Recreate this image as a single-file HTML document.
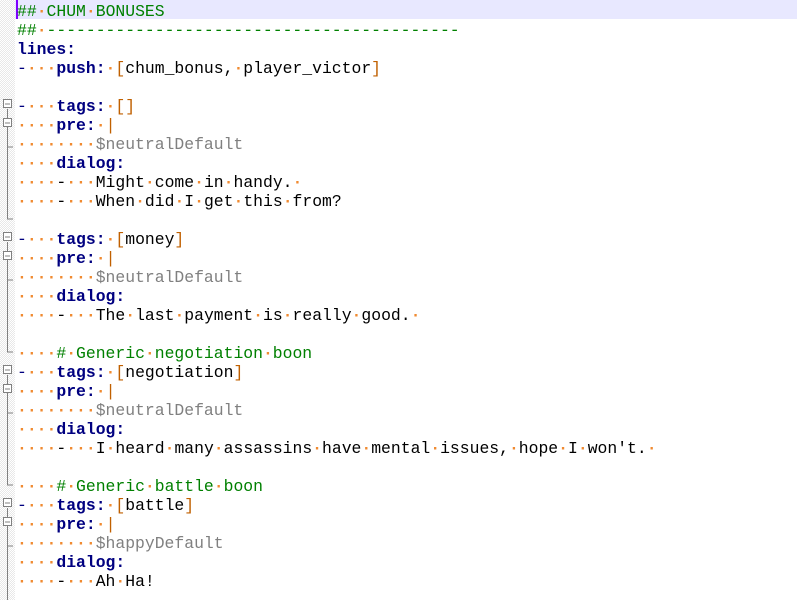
<!DOCTYPE html>
<html><head><meta charset="utf-8"><style>
body{margin:0;width:797px;height:600px;background:#fff;overflow:hidden;position:relative;font-family:"Liberation Mono",monospace;font-size:16.4px}
.m{position:absolute;left:0;top:0;width:15px;height:600px;background:repeating-conic-gradient(#e8e8e8 0 25%,#fff 0 50%) 0 0/2px 2px}
.hl{position:absolute;left:15px;top:0;width:782px;height:19px;background:#e8e8ff}
.car{position:absolute;left:16px;top:0;width:2px;height:19px;background:#8000ff}
.t{position:absolute;left:17px;top:2px;line-height:19px}
.r{height:19px;white-space:pre}
i{font-style:normal;color:#f08a30;font-weight:bold}
.k{color:#000080;font-weight:bold}
.n{color:#000080}
.c{color:#008000}
.b{color:#c06000}
.g{color:#808080}
</style></head><body>
<div class="m"></div>
<svg style="position:absolute;left:0;top:0" width="15" height="600">
<g stroke="#808080" fill="#fff" stroke-width="1">
<path d="M7.5 109V219H13M7.5 147H13M7.5 242V352H13M7.5 280H13M7.5 375V485H13M7.5 413H13M7.5 508V600M7.5 546H13" fill="none"/>
<rect x="3.5" y="99.5" width="8" height="8"/><rect x="3.5" y="118.5" width="8" height="8"/>
<rect x="3.5" y="232.5" width="8" height="8"/><rect x="3.5" y="251.5" width="8" height="8"/>
<rect x="3.5" y="365.5" width="8" height="8"/><rect x="3.5" y="384.5" width="8" height="8"/>
<rect x="3.5" y="498.5" width="8" height="8"/><rect x="3.5" y="517.5" width="8" height="8"/>
<path d="M5 104H10M5 123H10M5 237H10M5 256H10M5 370H10M5 389H10M5 503H10M5 522H10"/>
</g></svg>
<div class="hl"></div><div class="car"></div>
<div class="t"><div class="r c">##<i>·</i>CHUM<i>·</i>BONUSES</div><div class="r c">##<i>·</i>------------------------------------------</div><div class="r"><span class="k">lines:</span></div><div class="r"><span class="n">-</span><i>···</i><span class="k">push:</span><i>·</i><span class="b">[</span>chum_bonus,<i>·</i>player_victor<span class="b">]</span></div><div class="r"></div><div class="r"><span class="n">-</span><i>···</i><span class="k">tags:</span><i>·</i><span class="b">[]</span></div><div class="r"><i>····</i><span class="k">pre:</span><i>·</i><span class="b">|</span></div><div class="r"><i>········</i><span class="g">$neutralDefault</span></div><div class="r"><i>····</i><span class="k">dialog:</span></div><div class="r"><i>····</i>-<i>···</i>Might<i>·</i>come<i>·</i>in<i>·</i>handy.<i>·</i></div><div class="r"><i>····</i>-<i>···</i>When<i>·</i>did<i>·</i>I<i>·</i>get<i>·</i>this<i>·</i>from?</div><div class="r"></div><div class="r"><span class="n">-</span><i>···</i><span class="k">tags:</span><i>·</i><span class="b">[</span>money<span class="b">]</span></div><div class="r"><i>····</i><span class="k">pre:</span><i>·</i><span class="b">|</span></div><div class="r"><i>········</i><span class="g">$neutralDefault</span></div><div class="r"><i>····</i><span class="k">dialog:</span></div><div class="r"><i>····</i>-<i>···</i>The<i>·</i>last<i>·</i>payment<i>·</i>is<i>·</i>really<i>·</i>good.<i>·</i></div><div class="r"></div><div class="r"><i>····</i><span class="c">#<i>·</i>Generic<i>·</i>negotiation<i>·</i>boon</span></div><div class="r"><span class="n">-</span><i>···</i><span class="k">tags:</span><i>·</i><span class="b">[</span>negotiation<span class="b">]</span></div><div class="r"><i>····</i><span class="k">pre:</span><i>·</i><span class="b">|</span></div><div class="r"><i>········</i><span class="g">$neutralDefault</span></div><div class="r"><i>····</i><span class="k">dialog:</span></div><div class="r"><i>····</i>-<i>···</i>I<i>·</i>heard<i>·</i>many<i>·</i>assassins<i>·</i>have<i>·</i>mental<i>·</i>issues,<i>·</i>hope<i>·</i>I<i>·</i>won't.<i>·</i></div><div class="r"></div><div class="r"><i>····</i><span class="c">#<i>·</i>Generic<i>·</i>battle<i>·</i>boon</span></div><div class="r"><span class="n">-</span><i>···</i><span class="k">tags:</span><i>·</i><span class="b">[</span>battle<span class="b">]</span></div><div class="r"><i>····</i><span class="k">pre:</span><i>·</i><span class="b">|</span></div><div class="r"><i>········</i><span class="g">$happyDefault</span></div><div class="r"><i>····</i><span class="k">dialog:</span></div><div class="r"><i>····</i>-<i>···</i>Ah<i>·</i>Ha!</div></div>
</body></html>
